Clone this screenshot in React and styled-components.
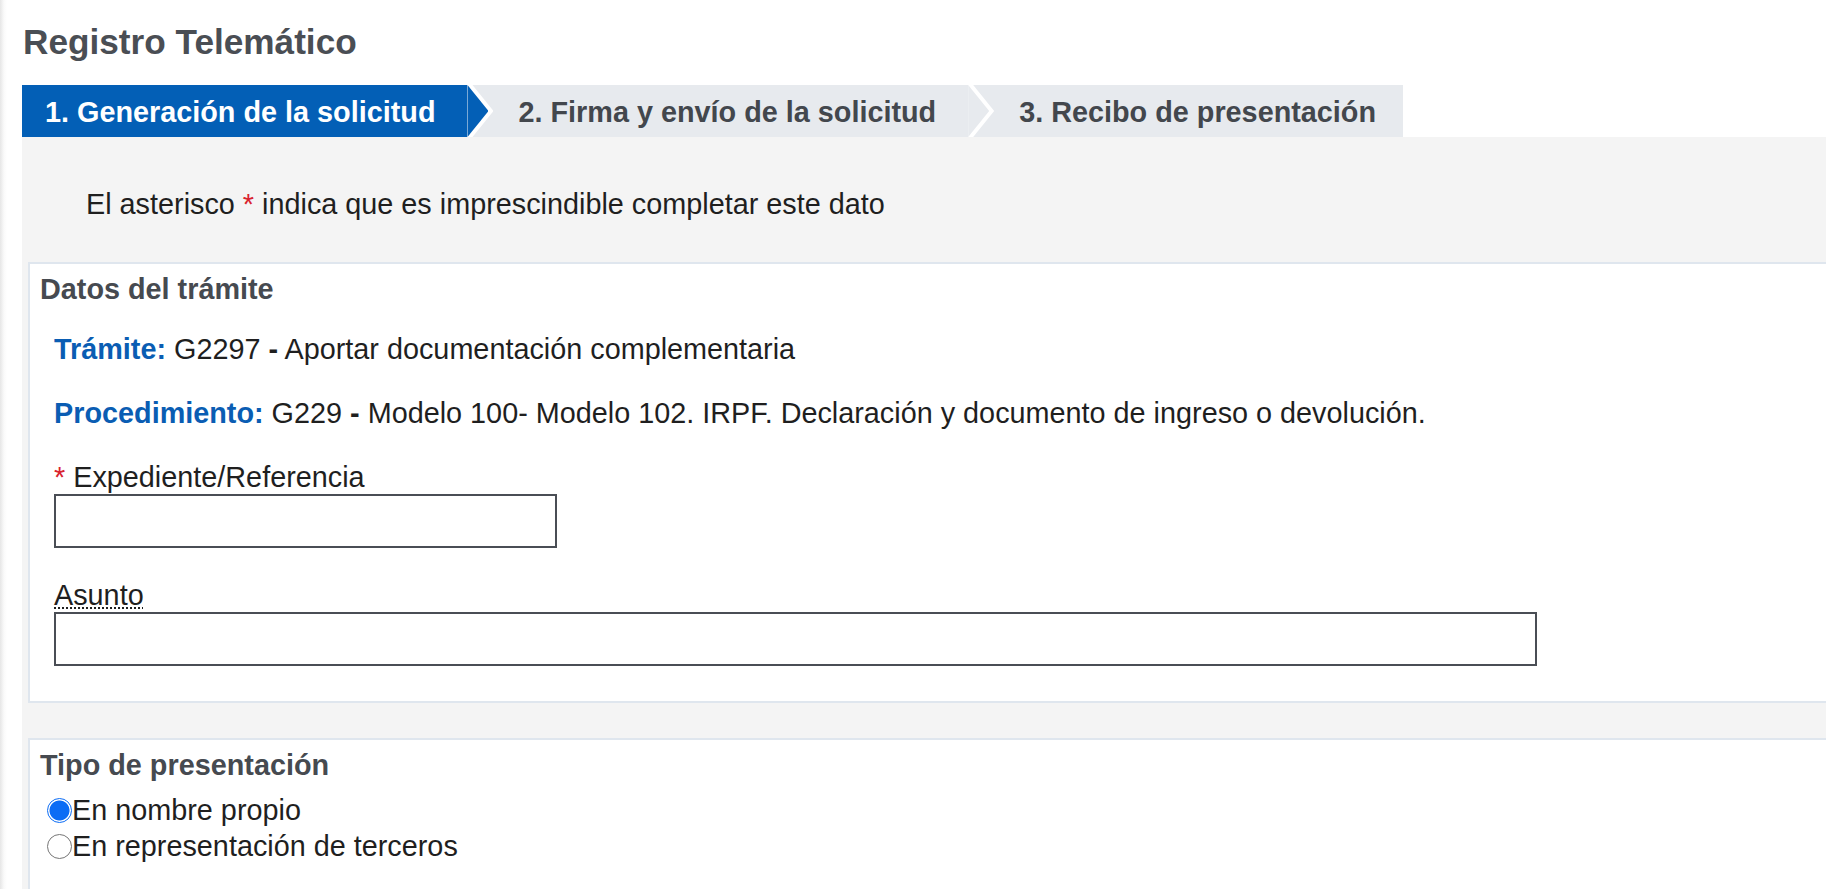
import styled, { createGlobalStyle } from "styled-components";

const GlobalStyle = createGlobalStyle`
  html, body {
    margin: 0;
    padding: 0;
    overflow: hidden;
  }
  body {
    font-family: "Liberation Sans", Arial, sans-serif;
    font-size: 28.8px;
    color: #1f1f1f;
    background: linear-gradient(90deg, #e6e6e6 0, #fafafa 4px, #fff 7px);
  }
`;

const steps = [
  "1. Generación de la solicitud",
  "2. Firma y envío de la solicitud",
  "3. Recibo de presentación",
];

function App() {
  return (
    <>
      <GlobalStyle />
      <Page>
        <Title>Registro Telemático</Title>

        <Steps>
          {steps.map((label, i) => (
            <Step
              key={label}
              $active={i === 0}
              $first={i === 0}
              $arrow={i < steps.length - 1}
            >
              {label}
            </Step>
          ))}
        </Steps>

        <Panel>
          <Notice>
            El asterisco <Req>*</Req> indica que es imprescindible completar
            este dato
          </Notice>

          <Card>
            <CardTitle>Datos del trámite</CardTitle>
            <CardBody>
              <InfoLine>
                <Key>Trámite:</Key> G2297 <b>-</b> Aportar documentación
                complementaria
              </InfoLine>
              <InfoLine>
                <Key>Procedimiento:</Key> G229 <b>-</b> Modelo 100- Modelo 102.
                IRPF. Declaración y documento de ingreso o devolución.
              </InfoLine>
              <Field>
                <Label htmlFor="expediente">
                  <Req>*</Req> Expediente/Referencia
                </Label>
                <TextInput id="expediente" type="text" $width={503} />
              </Field>
              <Field>
                <Label htmlFor="asunto">
                  <Abbr title="Asunto">Asunto</Abbr>
                </Label>
                <TextInput id="asunto" type="text" $width={1483} />
              </Field>
            </CardBody>
          </Card>

          <Card $gap={35}>
            <CardTitle>Tipo de presentación</CardTitle>
            <RadioList>
              <RadioRow>
                <Radio type="radio" name="tipo" defaultChecked />
                En nombre propio
              </RadioRow>
              <RadioRow>
                <Radio type="radio" name="tipo" />
                En representación de terceros
              </RadioRow>
            </RadioList>
          </Card>
        </Panel>
      </Page>
    </>
  );
}

export default App;

const Page = styled.div`
  min-height: 100vh;
  padding: 22px 0 0 22px;
  box-sizing: border-box;
  display: flex;
  flex-direction: column;
`;

const Title = styled.h1`
  margin: 0 0 23px 1px;
  font-size: 35.2px;
  font-weight: bold;
  line-height: normal;
  color: #4a4e54;
`;

const Steps = styled.ol`
  display: flex;
  margin: 0;
  padding: 0;
  list-style: none;
  height: 52px;
`;

const Step = styled.li`
  position: relative;
  height: 52px;
  box-sizing: border-box;
  padding: 11px ${(p) => (p.$arrow ? 32 : 27)}px 0
    ${(p) => (p.$first ? 23 : 51)}px;
  font-weight: bold;
  line-height: 33px;
  white-space: nowrap;
  background: ${(p) => (p.$active ? "#035fb6" : "#e7eaee")};
  color: ${(p) => (p.$active ? "#ffffff" : "#43474d")};

  &::after {
    content: "";
    display: ${(p) => (p.$arrow ? "block" : "none")};
    position: absolute;
    top: 0;
    left: 100%;
    width: 26px;
    height: 100%;
    background: #ffffff;
    clip-path: polygon(0 0, 5px 0, 26px 50%, 5px 100%, 0 100%);
    z-index: 1;
  }

  &::before {
    content: "";
    display: ${(p) => (p.$arrow ? "block" : "none")};
    position: absolute;
    top: 0;
    left: 100%;
    width: 21px;
    height: 100%;
    background: ${(p) => (p.$active ? "#035fb6" : "#e7eaee")};
    clip-path: polygon(0 0, 21px 50%, 0 100%);
    z-index: 2;
  }
`;

const Panel = styled.div`
  flex: 1;
  background: #f4f4f4;
  padding: 51px 0 0 6px;
  display: flex;
  flex-direction: column;
`;

const Notice = styled.p`
  margin: 0 0 41px 58px;
  line-height: 33px;
  color: #1f1f1f;
`;

const Req = styled.span`
  color: #d9232e;
`;

const Card = styled.section`
  background: #ffffff;
  border: 2px solid #dfe6ee;
  border-right: none;
  padding: 9px 10px 35px;
  margin-top: ${(p) => p.$gap || 0}px;
`;

const CardTitle = styled.h2`
  margin: 0;
  font-size: 28.8px;
  font-weight: bold;
  line-height: 33px;
  color: #464a50;
`;

const CardBody = styled.div`
  display: flex;
  flex-direction: column;
  gap: 31px;
  margin-top: 27px;
  padding-left: 14px;
`;

const InfoLine = styled.p`
  margin: 0;
  line-height: 33px;
  color: #1f1f1f;

  b {
    font-weight: bold;
  }
`;

const Key = styled.strong`
  color: #0a5db3;
`;

const Field = styled.div`
  display: flex;
  flex-direction: column;
  align-items: flex-start;
`;

const Label = styled.label`
  line-height: 33px;
  color: #1f1f1f;
`;

const Abbr = styled.abbr`
  text-decoration: underline dotted;
  text-decoration-thickness: 2px;
  text-underline-offset: 2px;
`;

const TextInput = styled.input`
  width: ${(p) => p.$width}px;
  height: 54px;
  box-sizing: border-box;
  border: 2px solid #4a4e55;
  border-radius: 0;
  background: #ffffff;
  font: inherit;
  padding: 0 8px;
  outline: none;
`;

const RadioList = styled.div`
  display: flex;
  flex-direction: column;
  margin-top: 10px;
  padding-bottom: 40px;
`;

const RadioRow = styled.label`
  display: flex;
  align-items: center;
  height: 36px;
  color: #1f1f1f;
`;

const Radio = styled.input`
  appearance: none;
  width: 25px;
  height: 25px;
  margin: 0 0 0 7px;
  border-radius: 50%;
  border: 1.5px solid #767676;
  background: #ffffff;
  box-sizing: border-box;
  flex: none;

  &:checked {
    border: 1.5px solid #0b6cf5;
    background: radial-gradient(circle, #0b6cf5 0 9.6px, #ffffff 10.4px);
  }
`;
